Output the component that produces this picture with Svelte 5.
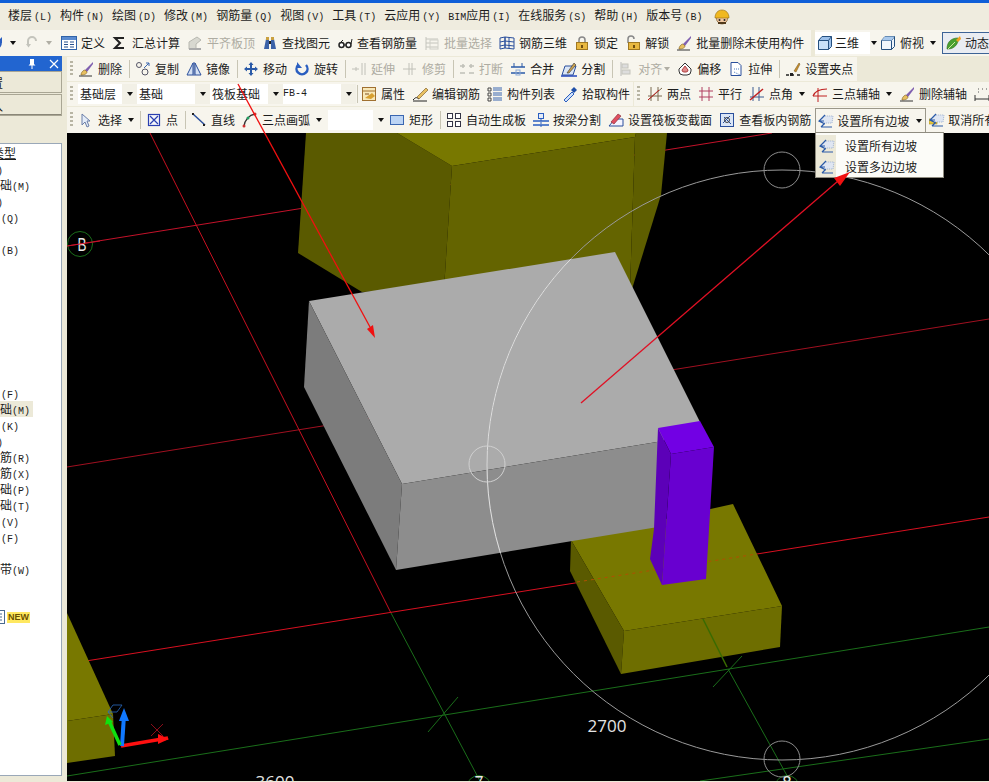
<script>
  const menus = [
    { t: '楼层', k: '(L)' }, { t: '构件', k: '(N)' }, { t: '绘图', k: '(D)' }, { t: '修改', k: '(M)' },
    { t: '钢筋量', k: '(Q)' }, { t: '视图', k: '(V)' }, { t: '工具', k: '(T)' }, { t: '云应用', k: '(Y)' },
    { t: '应用', k: '(I)', pre: 'BIM' }, { t: '在线服务', k: '(S)' }, { t: '帮助', k: '(H)' }, { t: '版本号', k: '(B)' }
  ];
  const S = { sep: true };
  const row1 = [
    { i: 'define', t: '定义' }, { i: 'sigma', t: '汇总计算' }, { i: 'align', t: '平齐板顶', off: true },
    { i: 'binoc', t: '查找图元' }, { i: 'glasses', t: '查看钢筋量' }, { i: 'batch', t: '批量选择', off: true },
    { i: 'rebar3d', t: '钢筋三维' }, { i: 'lock', t: '锁定' }, { i: 'unlock', t: '解锁' }, { i: 'eraser', t: '批量删除未使用构件' }
  ];
  const row2 = [
    { i: 'eraser', t: '删除' }, S, { i: 'copy', t: '复制' }, { i: 'mirror', t: '镜像' }, S,
    { i: 'move', t: '移动' }, { i: 'rotate', t: '旋转' }, S,
    { i: 'extend', t: '延伸', off: true }, { i: 'trim', t: '修剪', off: true }, S,
    { i: 'break', t: '打断', off: true }, { i: 'merge', t: '合并' }, { i: 'split', t: '分割' }, S,
    { i: 'alignl', t: '对齐', off: true, dd: 'small' }, { i: 'offset', t: '偏移' }, { i: 'stretch', t: '拉伸' }, S,
    { i: 'grip', t: '设置夹点' }
  ];
  const row3a = [
    { i: 'prop', t: '属性' }, { i: 'editbar', t: '编辑钢筋' }, { i: 'list', t: '构件列表' }, { i: 'pick', t: '拾取构件' }
  ];
  const row3b = [
    { i: 'twop', t: '两点' }, { i: 'para', t: '平行' }, { i: 'angle', t: '点角', dd: true },
    { i: 'arcaxis', t: '三点辅轴', dd: true }, { i: 'eraser', t: '删除辅轴' }, { i: 'dim', t: '' }
  ];
  const row4a = [
    { i: 'cursor', t: '选择', dd: true }, S, { i: 'point', t: '点' }, S, { i: 'line', t: '直线' }, { i: 'arc', t: '三点画弧', dd: true }
  ];
  const row4b = [
    { i: 'rect', t: '矩形' }, S, { i: 'auto', t: '自动生成板' }, { i: 'beamsplit', t: '按梁分割' },
    { i: 'section', t: '设置筏板变截面' }, { i: 'viewbar', t: '查看板内钢筋' }
  ];
  const tree = [
    { t: '类型', x: -8, u: true }, { k: ')', x: -3 }, { t: '础', k: '(M)', x: 0 }, { k: ')', x: -3 }, { k: '(Q)', x: 1 }, {},
    { k: '(B)', x: 1 }, {}, {}, {}, {}, {}, {}, {}, {},
    { k: '(F)', x: 1 }, { t: '础', k: '(M)', x: 0, sel: true }, { k: '(K)', x: 1 }, { k: ')', x: -3 },
    { t: '筋', k: '(R)', x: 0 }, { t: '筋', k: '(X)', x: 0 }, { t: '础', k: '(P)', x: 0 }, { t: '础', k: '(T)', x: 0 },
    { k: '(V)', x: 1 }, { k: '(F)', x: 1 }, {}, { t: '带', k: '(W)', x: 0 }
  ];
  const slope = '<path d="M1 8 7 3h8l-1 7H6z" fill="#dfe6f2" stroke="#9fb2d0" stroke-dasharray="1 1"/><path d="M7 2 1 8l6 3M1 8h5M3 14h11M3 14l3-3" fill="none" stroke="#2a5aa8" stroke-width="1.2"/>';
  const icons = {
    define: '<rect x=".5" y="1.5" width="15" height="13" fill="#fff" stroke="#2f62a8"/><rect x="1" y="2" width="14" height="3" fill="#5b8bd0"/><path d="M3 7h4M3 9.500h4M3 12h4M9 7h4M9 9.500h4M9 12h4" stroke="#27508c"/>',
    sigma: '<path d="M12 3H3l5 5-5 5h9" fill="none" stroke="#222" stroke-width="2"/>',
    align: '<path d="M2 14V7l8-5 4 3-5 4v5z" fill="#d8d8d0" stroke="#b8b8b0"/><path d="M2 14h12" stroke="#aaa" stroke-width="2"/>',
    binoc: '<path d="M2 14 4 4h3v10zM9 14V4h3l2 10z" fill="#3b62a8"/><path d="M4 2h3v3H4zM9 2h3v3H9z" fill="#c9a040"/><rect x="7" y="6" width="2" height="3" fill="#222"/>',
    glasses: '<circle cx="4.500" cy="10" r="2.500" fill="#fff" stroke="#222" stroke-width="1.500"/><circle cx="11.500" cy="10" r="2.500" fill="#fff" stroke="#222" stroke-width="1.500"/><path d="M2 9 6 5M14 9l1-5M7 10h2" stroke="#222" fill="none"/>',
    batch: '<path d="M2 2v13M5 4h9M5 8h9M5 12h9M2 4h3M2 8h3M2 12h3" stroke="#c4c4bc" fill="none"/><rect x="6" y="5" width="8" height="9" fill="none" stroke="#d0d0c8"/>',
    rebar3d: '<path d="M1 3v11l5-1V2zM6 2v11l9 1V3zM1 7l5-1 9 1M1 11l5-1 9 1M10 2.500v11" fill="none" stroke="#2a4f9c"/>',
    lock: '<path d="M5 8V5a3 3 0 0 1 6 0v3" fill="none" stroke="#888" stroke-width="1.500"/><rect x="2.500" y="7.500" width="11" height="7" fill="#e8b840" stroke="#a07820"/><rect x="7" y="10" width="2" height="3" fill="#704f10"/>',
    unlock: '<path d="M3 8V4a3 3 0 0 1 6 0" fill="none" stroke="#888" stroke-width="1.500"/><rect x="3.500" y="7.500" width="11" height="7" fill="#e8b840" stroke="#a07820"/><rect x="8" y="10" width="2" height="3" fill="#704f10"/>',
    eraser: '<path d="M15 1 7 9l2 2 6-8z" fill="#8060b0"/><path d="M3 13c1-3 3-4 4-4l2 2c0 2-3 3-6 3z" fill="#e8c060" stroke="#806020" stroke-width=".6"/><path d="M1 15h13" stroke="#333"/>',
    copy: '<circle cx="4" cy="4" r="2.500" fill="none" stroke="#556"/><circle cx="10" cy="11" r="3" fill="none" stroke="#556"/><path d="M11 2h3v3M9 7l5-5" stroke="#3a66b0" fill="none"/>',
    mirror: '<path d="M7 2 1 14h6zM9 2l6 12H9z" fill="#d4e0f2" stroke="#2a4f9c"/><path d="M8 1v14" stroke="#2a4f9c"/>',
    move: '<path d="M8 1 5.500 4H7v3H4V5.500L1 8l3 2.500V9h3v3H5.500L8 15l2.500-3H9V9h3v1.500L15 8l-3-2.500V7H9V4h1.500z" fill="#2a5aa8"/>',
    rotate: '<path d="M4 4a5.500 5.500 0 1 0 8 0" fill="none" stroke="#2a5ec0" stroke-width="2.500"/><path d="M3 1v6h5z" fill="#2a5ec0"/>',
    extend: '<path d="M1 8h7M5 6v4M11 2v12M14 2v12" stroke="#c0c0b8" fill="none"/>',
    trim: '<path d="M1 8h13M7 2v12M10 2v12" stroke="#c0c0b8" fill="none"/>',
    break: '<path d="M1 5h5M10 5h5M1 12h5M10 12h5M4 3v4M12 3v4" stroke="#c0c0b8" stroke-width="1.500" fill="none"/>',
    merge: '<path d="M1 6h14M1 12h14" stroke="#2a5aa8" stroke-width="1.500"/><path d="M4 2v4M12 2v4" stroke="#2a5aa8"/><rect x="6" y="9" width="4" height="5" fill="none" stroke="#8aa8d8"/>',
    split: '<path d="M1 14 4 5h11l-3 9z" fill="#dbe6f6" stroke="#2a4f9c"/><path d="M0 15h16" stroke="#2244bb" stroke-width="1.500"/><path d="M6 12 13 2l2 2-7 8z" fill="#c8a050" stroke="#333" stroke-width=".6"/>',
    alignl: '<path d="M3 1v14" stroke="#bbb"/><rect x="4" y="3" width="6" height="4" fill="#ddd" stroke="#c4c4bc"/><rect x="4" y="9" width="8" height="4" fill="#ddd" stroke="#c4c4bc"/>',
    offset: '<path d="M8 2 14 8v2a4 4 0 0 1-4 4H6a4 4 0 0 1-4-4V8z" fill="#fff" stroke="#333"/><path d="M8 5 11 9a2 2 0 0 1-2 2H7a2 2 0 0 1-2-2z" fill="#e08a8a" stroke="#b04040"/>',
    stretch: '<path d="M3 1.500h7l3 3v10H3z" fill="#fff" stroke="#2a4f9c"/><path d="M6 8h6M6 11l6 3" stroke="#4a7ac0" stroke-dasharray="1 1"/>',
    grip: '<path d="M1 14h3M7 14h2M12 14h3" stroke="#222" stroke-width="1.500"/><rect x="5" y="12" width="3" height="3" fill="#222"/><path d="M9 10 14 2l1 1-4 8z" fill="#c89030" stroke="#704f10" stroke-width=".5"/>',
    prop: '<rect x="1.500" y="1.500" width="13" height="13" fill="#f8e8b8" stroke="#a07030"/><path d="M1 5h14" stroke="#a07030"/><path d="M4 12 11 7l3 3-4 3z" fill="#d8a030"/><path d="M4 8h4" stroke="#805020"/>',
    editbar: '<path d="M1 14c3-3 3-3 6-1" fill="none" stroke="#222"/><path d="M5 11 14 2l2 2-9 9z" fill="#e8c060" stroke="#705020" stroke-width=".6"/><path d="M1 15h14" stroke="#222"/>',
    list: '<path d="M1 2h3v3H1zM1 7h3v3H1zM1 12h3v3H1z" fill="none" stroke="#444"/><path d="M6 2h9M6 4h9M6 7h9M6 9h9M6 12h9M6 14h9" stroke="#3a66b0"/>',
    pick: '<path d="M2 14 10 6l2 2-8 8z" fill="#cfe0f8" stroke="#2a5ec0"/><path d="M9 4 12 1l3 3-3 3z" fill="#1f4fa8"/>',
    twop: '<path d="M1 14 15 2M4 1v14M11 1v14M1 10h14" stroke="#7a6a50" fill="none"/><path d="M1 14 12 4" stroke="#c02020"/>',
    para: '<path d="M4 1v14M11 1v14M1 5h14M1 11h14" stroke="#b04060" fill="none"/>',
    angle: '<path d="M4 1v14M10 1v14M1 11h14" stroke="#3a5a90" fill="none"/><path d="M1 14 14 3" stroke="#c02020" stroke-width="1.500"/>',
    arcaxis: '<path d="M1 10C3 5 8 3 15 3" fill="none" stroke="#c02020" stroke-width="1.200"/><path d="M6 2v14M1 10h14" stroke="#c02020"/>',
    dim: '<path d="M1 9v6M15 9v6M1 13h14" stroke="#333"/><path d="M4 3h1M8 3h1M12 3h1M4 6h1" stroke="#555" stroke-dasharray="1 1"/>',
    cursor: '<path d="M4 2v11l3-3 2 5 2-1-2-5h3z" fill="#e4ecf8" stroke="#6a7ea8"/>',
    point: '<rect x="2.500" y="2.500" width="11" height="11" fill="#f4f6fa" stroke="#2a3fb0" stroke-width="1.200"/><path d="M4 4l8 8M12 4l-8 8" stroke="#2a3fb0" stroke-width="1.200"/>',
    line: '<path d="M2 2 14 13" stroke="#2a4f9c" stroke-width="1.500"/><path d="M14 14h-2v-2h2z" fill="#222"/><path d="M1 1h2v2H1z" fill="#222"/>',
    arc: '<path d="M2 14C3 8 7 3 13 2" fill="none" stroke="#333" stroke-width="1.500"/><circle cx="2" cy="14" r="1.500" fill="#d03030"/><circle cx="6" cy="6" r="1.500" fill="#20a060"/><circle cx="13" cy="2" r="1.500" fill="#d03030"/>',
    rect: '<rect x="1.500" y="3.500" width="13" height="9" fill="#bcd4f4" stroke="#3a66b0"/>',
    auto: '<rect x="1.500" y="1.500" width="5" height="5" fill="#fff" stroke="#334"/><rect x="9.500" y="1.500" width="5" height="5" fill="#fff" stroke="#334"/><rect x="1.500" y="9.500" width="5" height="5" fill="#fff" stroke="#334"/><rect x="9.500" y="9.500" width="5" height="5" fill="#fff" stroke="#334"/>',
    beamsplit: '<path d="M0 9h16M0 13h16" stroke="#2a5ec0" stroke-width="1.500"/><rect x="5.500" y="1.500" width="5" height="5" fill="#e4ecf8" stroke="#2a5ec0"/><path d="M8 7v8" stroke="#2a5ec0" stroke-dasharray="2 1"/>',
    section: '<path d="M1 14 7 7h8v7z" fill="#f4f4ff" stroke="#2a4f9c"/><path d="M3 10 10 2l3 2-7 8z" fill="#e05060" stroke="#802030" stroke-width=".6"/>',
    viewbar: '<rect x="1.500" y="1.500" width="13" height="13" fill="#dbe6f6" stroke="#2a4f9c"/><path d="M4 11 11 4M5 5l7 7" stroke="#2a4f9c"/><circle cx="8" cy="8" r="2.500" fill="none" stroke="#444"/>',
    slope,
    cancel: '<rect x="0" y="7" width="8" height="5" fill="#e8c840" stroke="#a08820" stroke-width=".6"/>' + slope,
    box3: '<path d="M1.500 5.500 5 1.500h9.500v10l-3 3h-10z" fill="#9cc0ea" stroke="#25507f"/><path d="M1.500 5.500h10v9M11.500 5.500l3-4" fill="none" stroke="#25507f"/><path d="M2 6h9v8H2z" fill="#c8e0f8"/>',
    box4: '<path d="M1.500 5.500 5 1.500h9.500v10l-3 3h-10z" fill="#f0f6fc" stroke="#25507f"/><path d="M1.500 5.500h10v9M11.500 5.500l3-4" fill="none" stroke="#25507f"/><path d="M5 1.500h9.500l-3 4h-10z" fill="#a8c8ec"/>',
    leaf: '<path d="M1 14C1 7 5 3 12 3c1 6-4 11-10 11z" fill="#4aa030" stroke="#2a6a18" stroke-width=".6"/><path d="M10 5l4-4 1 3-3 3z" fill="#f0a020"/><path d="M2 14 9 7" stroke="#cfe8a0"/>',
    undo: '<path d="M3 6a5 5 0 1 0 9 0" fill="none" stroke="#2a5ec0" stroke-width="2.500"/><path d="M14 2v6H8z" fill="#2a5ec0"/>',
    redo: '<path d="M12 6a4 4 0 0 0-8 0v4" fill="none" stroke="#c4c4bc" stroke-width="2"/><path d="M2 9h5l-2.500 3.500z" fill="#c4c4bc"/>',
    doc: '<rect x="1.500" y="1.500" width="13" height="13" fill="#fff" stroke="#4a6a90"/><path d="M4 5h8M4 8h8M4 11h8" stroke="#4a6a90" stroke-dasharray="2 1"/>'
  };
</script>

{#snippet icon(name)}
  <svg class="ico" viewBox="0 0 16 16" width="16" height="16">{@html icons[name]}</svg>
{/snippet}

{#snippet tools(list)}
  {#each list as it}
    {#if it.sep}
      <span class="sep"></span>
    {:else}
      <span class="tool" class:off={it.off} class:hasdd={it.dd}>
        {@render icon(it.i)}
        {#if it.t}<span class="lbl">{it.t}</span>{/if}
      </span>
      {#if it.dd === true}<span class="dd"></span>{/if}
      {#if it.dd === 'small'}<span class="dd small off"></span>{/if}
    {/if}
  {/each}
{/snippet}

<div class="app">
  <div class="blue"></div>
  <div class="menu">
    {#each menus as m}
      <span class="mi">{#if m.pre}<span class="k">{m.pre}</span>{/if}{m.t}<span class="k gap">{m.k}</span></span>
    {/each}
    <svg class="hat" viewBox="0 0 16 16" width="16" height="16">
      <circle cx="8" cy="9.500" r="5.500" fill="#f0c8a0" stroke="#604010" stroke-width=".6"/>
      <path d="M1 9C1 4 4 1 8 1s7 3 7 8H1z" fill="#f0b820" stroke="#906810" stroke-width=".6"/>
      <circle cx="5.500" cy="11" r="1" fill="#222"/><circle cx="10.500" cy="11" r="1" fill="#222"/>
      <path d="M4 13h8v2H4z" fill="#503818"/>
    </svg>
  </div>

  <div class="row r1">
    <div class="seg s1">
      <span class="undo">{@render icon('undo')}</span><span class="dd"></span>
      <span class="redo">{@render icon('redo')}</span><span class="dd off"></span>
      {@render tools(row1)}
    </div>
    <div class="seg s2">
      <span class="white3">{@render icon('box3')}<span class="lbl">三维</span></span><span class="dd d3"></span>
      <span class="tool view">{@render icon('box4')}<span class="lbl">俯视</span></span><span class="dd d4"></span>
      <span class="dyn">{@render icon('leaf')}<span class="lbl">动态观察</span></span>
    </div>
  </div>

  <div class="main">
    <aside class="panel">
      <div class="title">
        <svg viewBox="0 0 10 12" width="10" height="12" class="pin"><path d="M3 1h4v5l1.500 1.500h-7L3 6zM4.500 7.500h1V11h-1z" fill="#fff"/></svg>
        <svg viewBox="0 0 10 10" width="10" height="10" class="close"><path d="M1 1l8 8M9 1 1 9" stroke="#fff" stroke-width="1.200"/></svg>
      </div>
      <div class="tab"><span>设置</span></div>
      <div class="tab t2"><span>导入</span></div>
      <div class="spacer"></div>
      <div class="treebox">
        {#each tree as r}
          <div class="trow">
            {#if r.t || r.k}
              <span class="tcell" class:sel={r.sel} class:und={r.u} style="margin-left:{r.x}px">{#if r.t}{r.t}{/if}{#if r.k}<span class="k">{r.k}</span>{/if}</span>
            {/if}
          </div>
        {/each}
        <div class="newrow">
          <svg viewBox="0 0 16 16" width="16" height="16" class="docico">{@html icons.doc}</svg>
          <span class="newtag">NEW</span>
        </div>
      </div>
    </aside>

    <div class="work">
      <div class="row r2">
        <div class="seg s2a">
          <span class="grip"></span>
          {@render tools(row2)}
        </div>
      </div>
      <div class="row r3">
        <div class="seg s3a">
          <span class="grip"></span>
          <span class="combo c1">基础层</span><span class="dd inbox"></span>
          <span class="combo c2">基础</span><span class="dd inbox"></span>
          <span class="combo c2">筏板基础</span><span class="dd inbox"></span>
          <span class="combo c2 fb">FB-4</span><span class="dd inbox"></span>
          <span class="sep s4"></span>
          {@render tools(row3a)}
        </div>
        <div class="seg s3b">
          <span class="grip"></span>
          {@render tools(row3b)}
        </div>
      </div>
      <div class="row r4">
        <div class="seg s4a">
          <span class="grip"></span>
          {@render tools(row4a)}
          <span class="combo c3"></span><span class="dd inbox nar"></span>
          {@render tools(row4b)}
          <span class="slopebtn">
            {@render icon('slope')}<span class="lbl">设置所有边坡</span><span class="dd"></span>
          </span>
          <span class="tool cancel">{@render icon('cancel')}<span class="lbl">取消所有边坡</span></span>
        </div>
      </div>

      <svg class="scene" viewBox="67 134 922 648" width="922" height="648">
        <defs>
          <clipPath id="slabclip"><polygon points="309,302 615,253 700,423 663,442 658,528 396,571 304,388"/></clipPath>
        </defs>
        <rect x="67" y="134" width="922" height="648" fill="#000"/>
        <g fill="none" stroke-width="1">
          <path d="M67 247 772 134" stroke="#c4122a"/>
          <path d="M67 468 989 320" stroke="#a01020"/>
          <path d="M67 665 989 518" stroke="#d81020"/>
          <path d="M150 134 391 614" stroke="#c81020"/>
          <path d="M391 614 480 782" stroke="#1a6e1a"/>
          <path d="M67 777 989 628" stroke="#1a6e1a"/>
          <path d="M700 782 989 740" stroke="#1a6e1a"/>
          <path d="M728 670 790 782" stroke="#1a6e1a"/>
          <path d="M428 733 458 698M713 688 742 657" stroke="#1a6e1a"/>
          <circle cx="80" cy="245" r="12.500" stroke="#1a6e1a"/>
          <circle cx="479" cy="789" r="12.500" stroke="#1a6e1a"/>
          <circle cx="787" cy="789" r="12.500" stroke="#1a6e1a"/>
        </g>
        <text class="axis" x="82" y="252" text-anchor="middle" textLength="9" lengthAdjust="spacingAndGlyphs">B</text>
        <path d="M67 247 100 242" stroke="#c4122a" fill="none"/>

        <polygon points="306,134 397,134 452,167 444,290 362,293 298,254" fill="#5a5a00"/>
        <polygon points="397,134 636,134 635,138 452,167" fill="#787800"/>
        <polygon points="452,167 635,138 630,290 444,290" fill="#646400"/>
        <polygon points="635,138 636,134 667,134 661,196 632,290 630,290" fill="#5e5e00"/>

        <polygon points="571,541 733,505 782,607 624,632" fill="#787800"/>
        <polygon points="571,541 570,572 621,675 624,632" fill="#5a5a00"/>
        <polygon points="624,632 782,607 780,648 621,675" fill="#6e6e00"/>
        <path d="M703 620 727 668" stroke="#3a6a00" stroke-width="1.500"/>
        <path d="M577 583 757 555" stroke="#b05000" stroke-dasharray="3 4"/>

        <polygon points="309,302 615,253 700,423 663,442 402,485" fill="#ababab"/>
        <polygon points="309,302 402,485 396,571 304,388" fill="#7c7c7c"/>
        <polygon points="402,485 663,442 658,528 396,571" fill="#8d8d8d"/>

        <polygon points="658,429 700,422 714,448 671,455" fill="#7200e4"/>
        <polygon points="671,455 714,448 706,580 662,586" fill="#6800d0"/>
        <polygon points="658,429 671,455 662,586 650,560 654,530" fill="#5c00b8"/>

        <polygon points="67,614 113,715 67,722" fill="#787800"/>
        <polygon points="67,722 113,715 115,757 67,764" fill="#6e6e00"/>

        <g fill="none" stroke-width="1">
          <circle cx="782" cy="466" r="295" stroke="#9a9a9a"/>
          <circle cx="782" cy="466" r="295" stroke="#e0e0e0" clip-path="url(#slabclip)"/>
          <circle cx="487" cy="465" r="18" stroke="#d0d0d0"/>
          <circle cx="782" cy="171" r="18" stroke="#8c8c8c"/>
          <circle cx="782" cy="760" r="18" stroke="#8c8c8c"/>
        </g>

        <text class="dimt" x="607" y="733" text-anchor="middle">2700</text>
        <text class="dimt" x="275" y="789" text-anchor="middle">3600</text>
        <text class="axis" x="479" y="790" text-anchor="middle" textLength="9" lengthAdjust="spacingAndGlyphs">7</text>
        <text class="axis" x="787" y="790" text-anchor="middle" textLength="9" lengthAdjust="spacingAndGlyphs">8</text>

        <path d="M113 706h9l-5 7h-9zM108 713l5 6" fill="none" stroke="#2a6ac0" stroke-width=".8"/>
        <path d="M151 725 163 737M163 725 151 737" stroke="#b01020" stroke-width=".8"/>
        <path d="M121 747 168 739" stroke="#ff1010" stroke-width="3.500"/>
        <polygon points="158,735 169,740 158,745" fill="#ff1010"/>
        <path d="M122 747 124 716" stroke="#1078ff" stroke-width="4"/>
        <polygon points="124,709 119,722 129,722" fill="#1078ff"/>
        <path d="M120 746 109 722" stroke="#10e010" stroke-width="3.500"/>
        <polygon points="107,717 105,726 113,723" fill="#10e010"/>
      </svg>
    </div>
  </div>

  <div class="popup">
    <div class="pitem">{@render icon('slope')}<span>设置所有边坡</span></div>
    <div class="pitem">{@render icon('slope')}<span>设置多边边坡</span></div>
  </div>

  <svg class="notes" viewBox="0 0 989 782" width="989" height="782">
    <path d="M238 84 370 327" stroke="#f01010" stroke-width="1.300"/>
    <polygon points="375,338 367,329 373,325" fill="#f01010"/>
    <path d="M581 403 838 181" stroke="#e01024" stroke-width="1.300"/>
    <polygon points="850,172 834,178 840,186" fill="#f01010"/>
  </svg>
</div>

<style>
  :global(body) { margin: 0; }
  .app {
    position: relative;
    width: 989px;
    height: 782px;
    overflow: hidden;
    background: #ece9d8;
    color: #1c1c1c;
    font: 12px/16px "Noto Sans CJK SC", "Liberation Sans", sans-serif;
  }
  .blue { height: 3px; background: #0f5fd8; }
  .k { font-family: "Liberation Mono", monospace; font-size: 10px; }
  .gap { margin-left: 2px; }
  .menu {
    display: flex;
    align-items: center;
    height: 27px;
    padding-left: 8px;
    gap: 8px;
    background: #efecdf;
    white-space: nowrap;
  }
  .hat { margin-left: 4px; }
  .row { display: flex; overflow: hidden; white-space: nowrap; }
  .seg { display: flex; align-items: center; background: #f7f5ed; flex: none; }
  .r1 { height: 26px; }
  .s1 { width: 811px; }
  .s2 { flex: 1; margin-left: 4px; overflow: hidden; }
  .undo { margin-left: -12px; display: flex; }
  .redo { margin-left: 2px; display: flex; }
  .redo + .dd { margin-right: 3px; }
  .ico { flex: none; display: block; }
  .tool { display: flex; align-items: center; gap: 4px; margin-right: 7px; flex: none; }
  .tool.hasdd { margin-right: 0; }
  .off { color: #aeaca2; }
  .sep { width: 1px; height: 18px; background: #c8c5b4; flex: none; margin-right: 5px; }
  .dd { width: 18px; height: 16px; flex: none; position: relative; display: block; }
  .dd::after {
    content: "";
    position: absolute;
    left: 6px;
    top: 6px;
    border: 3px solid transparent;
    border-top: 4px solid #111;
    border-bottom: 0;
  }
  .dd.off::after { border-top-color: #b0aea4; }
  .dd.small { width: 15px; }
  .dd.small::after { left: 2px; }
  .grip {
    width: 3px;
    height: 16px;
    margin: 0 5px 0 3px;
    flex: none;
    background: repeating-linear-gradient(to bottom, #b8b5a4 0 2px, transparent 2px 4px);
  }

  .white3 { display: flex; align-items: center; gap: 2px; background: #fff; height: 22px; width: 55px; padding-left: 2px; box-sizing: border-box; flex: none; }
  .d3 { width: 10px; }
  .d3::after { left: 1px; }
  .view { margin-right: 0; }
  .dyn {
    display: flex; align-items: center; gap: 3px;
    height: 20px; padding: 0 3px;
    border: 1px solid #3d6396;
    background: #e9ecf2;
    flex: none;
  }

  .main { display: flex; height: 726px; }
  .panel { width: 67px; flex: none; display: flex; flex-direction: column; }
  .title {
    height: 15px; width: 62px; background: #2265d0;
    display: flex; align-items: center; justify-content: flex-end; gap: 12px; padding-right: 3px; box-sizing: border-box;
  }
  .tab {
    height: 22px; width: 62px; box-sizing: border-box;
    border: 1px solid #a9a694; border-left: 0; background: #ece9d8;
    overflow: hidden; line-height: 22px;
  }
  .tab span { margin-left: -21px; }
  .t2 { margin-top: 1px; box-shadow: inset 0 -1px 0 #8a8778; }
  .spacer { height: 27px; }
  .treebox {
    width: 62px; height: 633px; box-sizing: border-box; background: #fff; overflow: hidden;
    border: 1px solid #9aa8b8; border-left: 0; padding-top: 1px;
  }
  .trow { height: 16px; display: flex; align-items: center; }
  .tcell { padding-right: 3px; height: 16px; flex: none; }
  .sel { background: #ece9d8; }
  .und { text-decoration: underline; }
  .newrow { display: flex; align-items: center; gap: 1px; margin-left: -10px; margin-top: 32px; }
  .docico { flex: none; }
  .newtag {
    font: bold 9px/11px "Liberation Sans", sans-serif; color: #6a5000; background: #ffe860;
    padding: 0 1px;
  }

  .work { width: 922px; flex: none; display: flex; flex-direction: column; }
  .r2 { height: 24px; margin-top: 1px; }
  .s2a { width: 790px; }
  .r3 { height: 24px; margin-top: 1px; }
  .s3a { width: 566px; }
  .s3b { flex: 1; margin-left: 1px; overflow: hidden; }
  .s3b .grip { margin-right: 7px; }
  .s3b .dd { width: 19px; }
  .combo { background: #fff; height: 20px; line-height: 20px; flex: none; padding-left: 2px; box-sizing: border-box; }
  .c1 { width: 44px; margin-left: 0; }
  .c2 { width: 58px; }
  .c3 { width: 45px; }
  .fb { font-family: "Liberation Mono", monospace; font-size: 10px; padding-left: 0; }
  .inbox { width: 15px; background: #f2f0e6; height: 20px; }
  .inbox::after { top: 8px; left: 5px; }
  .s4 { margin-left: 1px; margin-right: 3px; }
  .r4 { height: 26px; margin-top: 1px; }
  .s4a { flex: 1; overflow: hidden; }
  .nar { width: 16px; background: none; }
  .slopebtn {
    display: flex; align-items: center; gap: 3px; flex: none;
    height: 24px; width: 111px; box-sizing: border-box;
    margin-left: -3px; padding-left: 2px;
    border: 1px solid #9a978a; border-bottom: 0; background: #f7f5ed;
  }
  .slopebtn .dd { margin-left: -2px; }
  .cancel { margin-left: 3px; gap: 3px; margin-right: 0; }
  .scene { display: block; flex: none; }
  .axis { font: 18px "Liberation Sans", sans-serif; fill: #e8e8e8; }
  .dimt { font: 17px "Open Sans", sans-serif; fill: #e4e4e4; }

  .popup {
    position: absolute; left: 815px; top: 132px; width: 129px; height: 46px;
    box-sizing: border-box; border: 1px solid #8f8c80; background: #fcfcf8;
    padding-top: 2px;
  }
  .pitem { display: flex; align-items: center; height: 21px; gap: 10px; padding-left: 3px;
    background: linear-gradient(to right, #ece9d8 0 20px, transparent 20px); }
  .notes { position: absolute; left: 0; top: 0; pointer-events: none; }
</style>
